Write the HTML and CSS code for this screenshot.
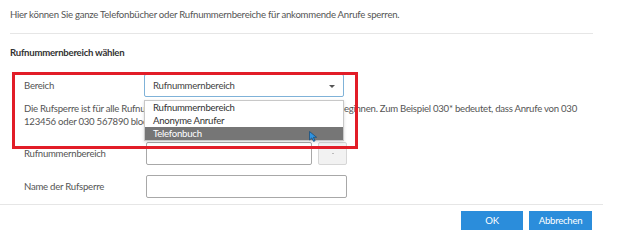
FILE: index.html
```html
<!DOCTYPE html>
<html>
<head>
	<meta charset="utf-8">
	<title>Rufsperre</title>
	<link rel="stylesheet" href="styles.css">
</head>
<body>
	<div class="dialog">
		<div class="dialog__body">
			<p class="intro">Hier können Sie ganze Telefonbücher oder Rufnummernbereiche für ankommende Anrufe sperren.</p>
			<div class="divider"></div>

			<h3 class="section-title">Rufnummernbereich wählen</h3>

			<form class="form">
				<div class="form__row">
					<label class="form__label">Bereich</label>
					<div class="select">
						<div class="select__value">Rufnummernbereich</div>
						<span class="select__arrow"></span>

						<ul class="select__list">
							<li class="select__option">Rufnummernbereich</li>
							<li class="select__option">Anonyme Anrufer</li>
							<li class="select__option select__option_hover">Telefonbuch</li>
						</ul>

						<svg class="cursor" width="9" height="11" viewBox="0 0 9 11">
							<path d="M0.5 0.5 L0.5 9 L2.8 6.9 L4.6 10.4 L6.1 9.7 L4.4 6.3 L7.6 6.3 Z" fill="#2f93e0" stroke="#1d4f7a" stroke-width="0.8"/>
						</svg>
					</div>
				</div>

				<p class="form__hint">Die Rufsperre ist für alle Rufnummern aktiv, die mit der hier gewählten Vorwahl beginnen. Zum Beispiel 030* bedeutet, dass Anrufe von 030<br>123456 oder 030 567890 blockiert werden.</p>

				<div class="form__row form__row_range">
					<label class="form__label">Rufnummernbereich</label>
					<div class="form__field">
						<input class="input input_short" type="text">
						<button class="btn-small" type="button"><span class="btn-small__dot"></span></button>
					</div>
				</div>

				<div class="form__row form__row_name">
					<label class="form__label">Name der Rufsperre</label>
					<div class="form__field">
						<input class="input input_long" type="text">
					</div>
				</div>
			</form>

			<!-- markierung -->
			<div class="highlight"></div>
		</div>

		<div class="dialog__footer">
			<button class="btn" type="button">OK</button>
			<button class="btn" type="button">Abbrechen</button>
		</div>
	</div>
</body>
</html>
```

FILE: styles.css
```css
body {
	margin: 0;
	font-size: 9.6px;
	letter-spacing: -0.25px;
	font-family: Lato, "Open Sans", sans-serif;
	color: #555;
	background: #fff;
}


.dialog {
	width: 603px;
}
	.dialog__body {
		position: relative;
		padding: 0 10px;
	}

	.intro {
		margin: 8px 0 0;
		line-height: 14px;
	}

	.divider {
		margin-top: 11px;
		border-top: 1px solid #e6e6e6;
	}

	.section-title {
		margin: 12px 0 0;
		font-size: 9.6px;
		line-height: 14px;
		font-weight: bold;
		color: #333;
	}


.form {
	margin: 14px 0 0;
	padding-left: 14px;
}
	.form__row {
		display: grid;
		grid-template-columns: 120px 1fr;
		align-items: center;
		height: 23px;
	}
		.form__row_range { margin-top: 14px; }
		.form__row_name { margin-top: 10px; }

	.form__label {
		line-height: 14px;
	}

	.form__field {
		display: flex;
		gap: 6px;
		padding-left: 2px;
		height: 23px;
	}

	.form__hint {
		margin: 5px 0 0;
		line-height: 13px;
	}


.select {
	position: relative;
	width: 200px;
	height: 23px;
	box-sizing: border-box;
	border: 1px solid #7fb2d8;
	border-radius: 2px;
	color: #444;
}
	.select__value {
		padding-left: 8px;
		line-height: 21px;
	}
	.select__arrow {
		position: absolute;
		top: 10px;
		right: 8px;
		border-left: 3px solid transparent;
		border-right: 3px solid transparent;
		border-top: 3px solid #555;
	}

	.select__list {
		position: absolute;
		z-index: 2;
		top: 25px;
		left: -1px;
		width: 200px;
		margin: 0;
		padding: 0;
		list-style: none;
		box-sizing: border-box;
		border: 1px solid #c8c8c8;
		background: #fff;
		box-shadow: 0 1px 3px rgba(0,0,0,.15);
	}
		.select__option {
			padding-left: 8px;
			line-height: 13px;
			color: #333;
		}
		.select__option_hover {
			background: #767676;
			color: #fff;
		}

	.cursor {
		position: absolute;
		z-index: 3;
		left: 164px;
		top: 56px;
	}


.input {
	box-sizing: border-box;
	height: 23px;
	margin: 0;
	border: 1px solid #a8a8a8;
	border-radius: 2px;
	background: #fff;
}
	.input_short { width: 166px; }
	.input_long { width: 201px; }

.btn-small {
	position: relative;
	width: 29px;
	height: 23px;
	margin: 0;
	padding: 0;
	border: 1px solid #d6d6d6;
	border-radius: 2px;
	background: #f2f2f2;
}
	.btn-small__dot {
		display: block;
		width: 2px;
		height: 1px;
		margin: 0 auto;
		background: #bbb;
	}


.highlight {
	position: absolute;
	z-index: 4;
	top: 64px;
	left: 12px;
	width: 346px;
	height: 77px;
	box-sizing: border-box;
	border: 3px solid #e21d27;
	pointer-events: none;
}


.dialog__footer {
	display: flex;
	justify-content: flex-end;
	gap: 6px;
	margin-top: 6px;
	padding: 6px 11px 0 0;
	border-top: 1px solid #e6e6e6;
}
	.btn {
		width: 62px;
		height: 19px;
		padding: 0;
		border: 0;
		background: #2b8ddb;
		color: #fff;
		font: 9.6px Lato, "Open Sans", sans-serif;
		letter-spacing: -0.25px;
	}
		.btn + .btn { width: 63px; }
```
